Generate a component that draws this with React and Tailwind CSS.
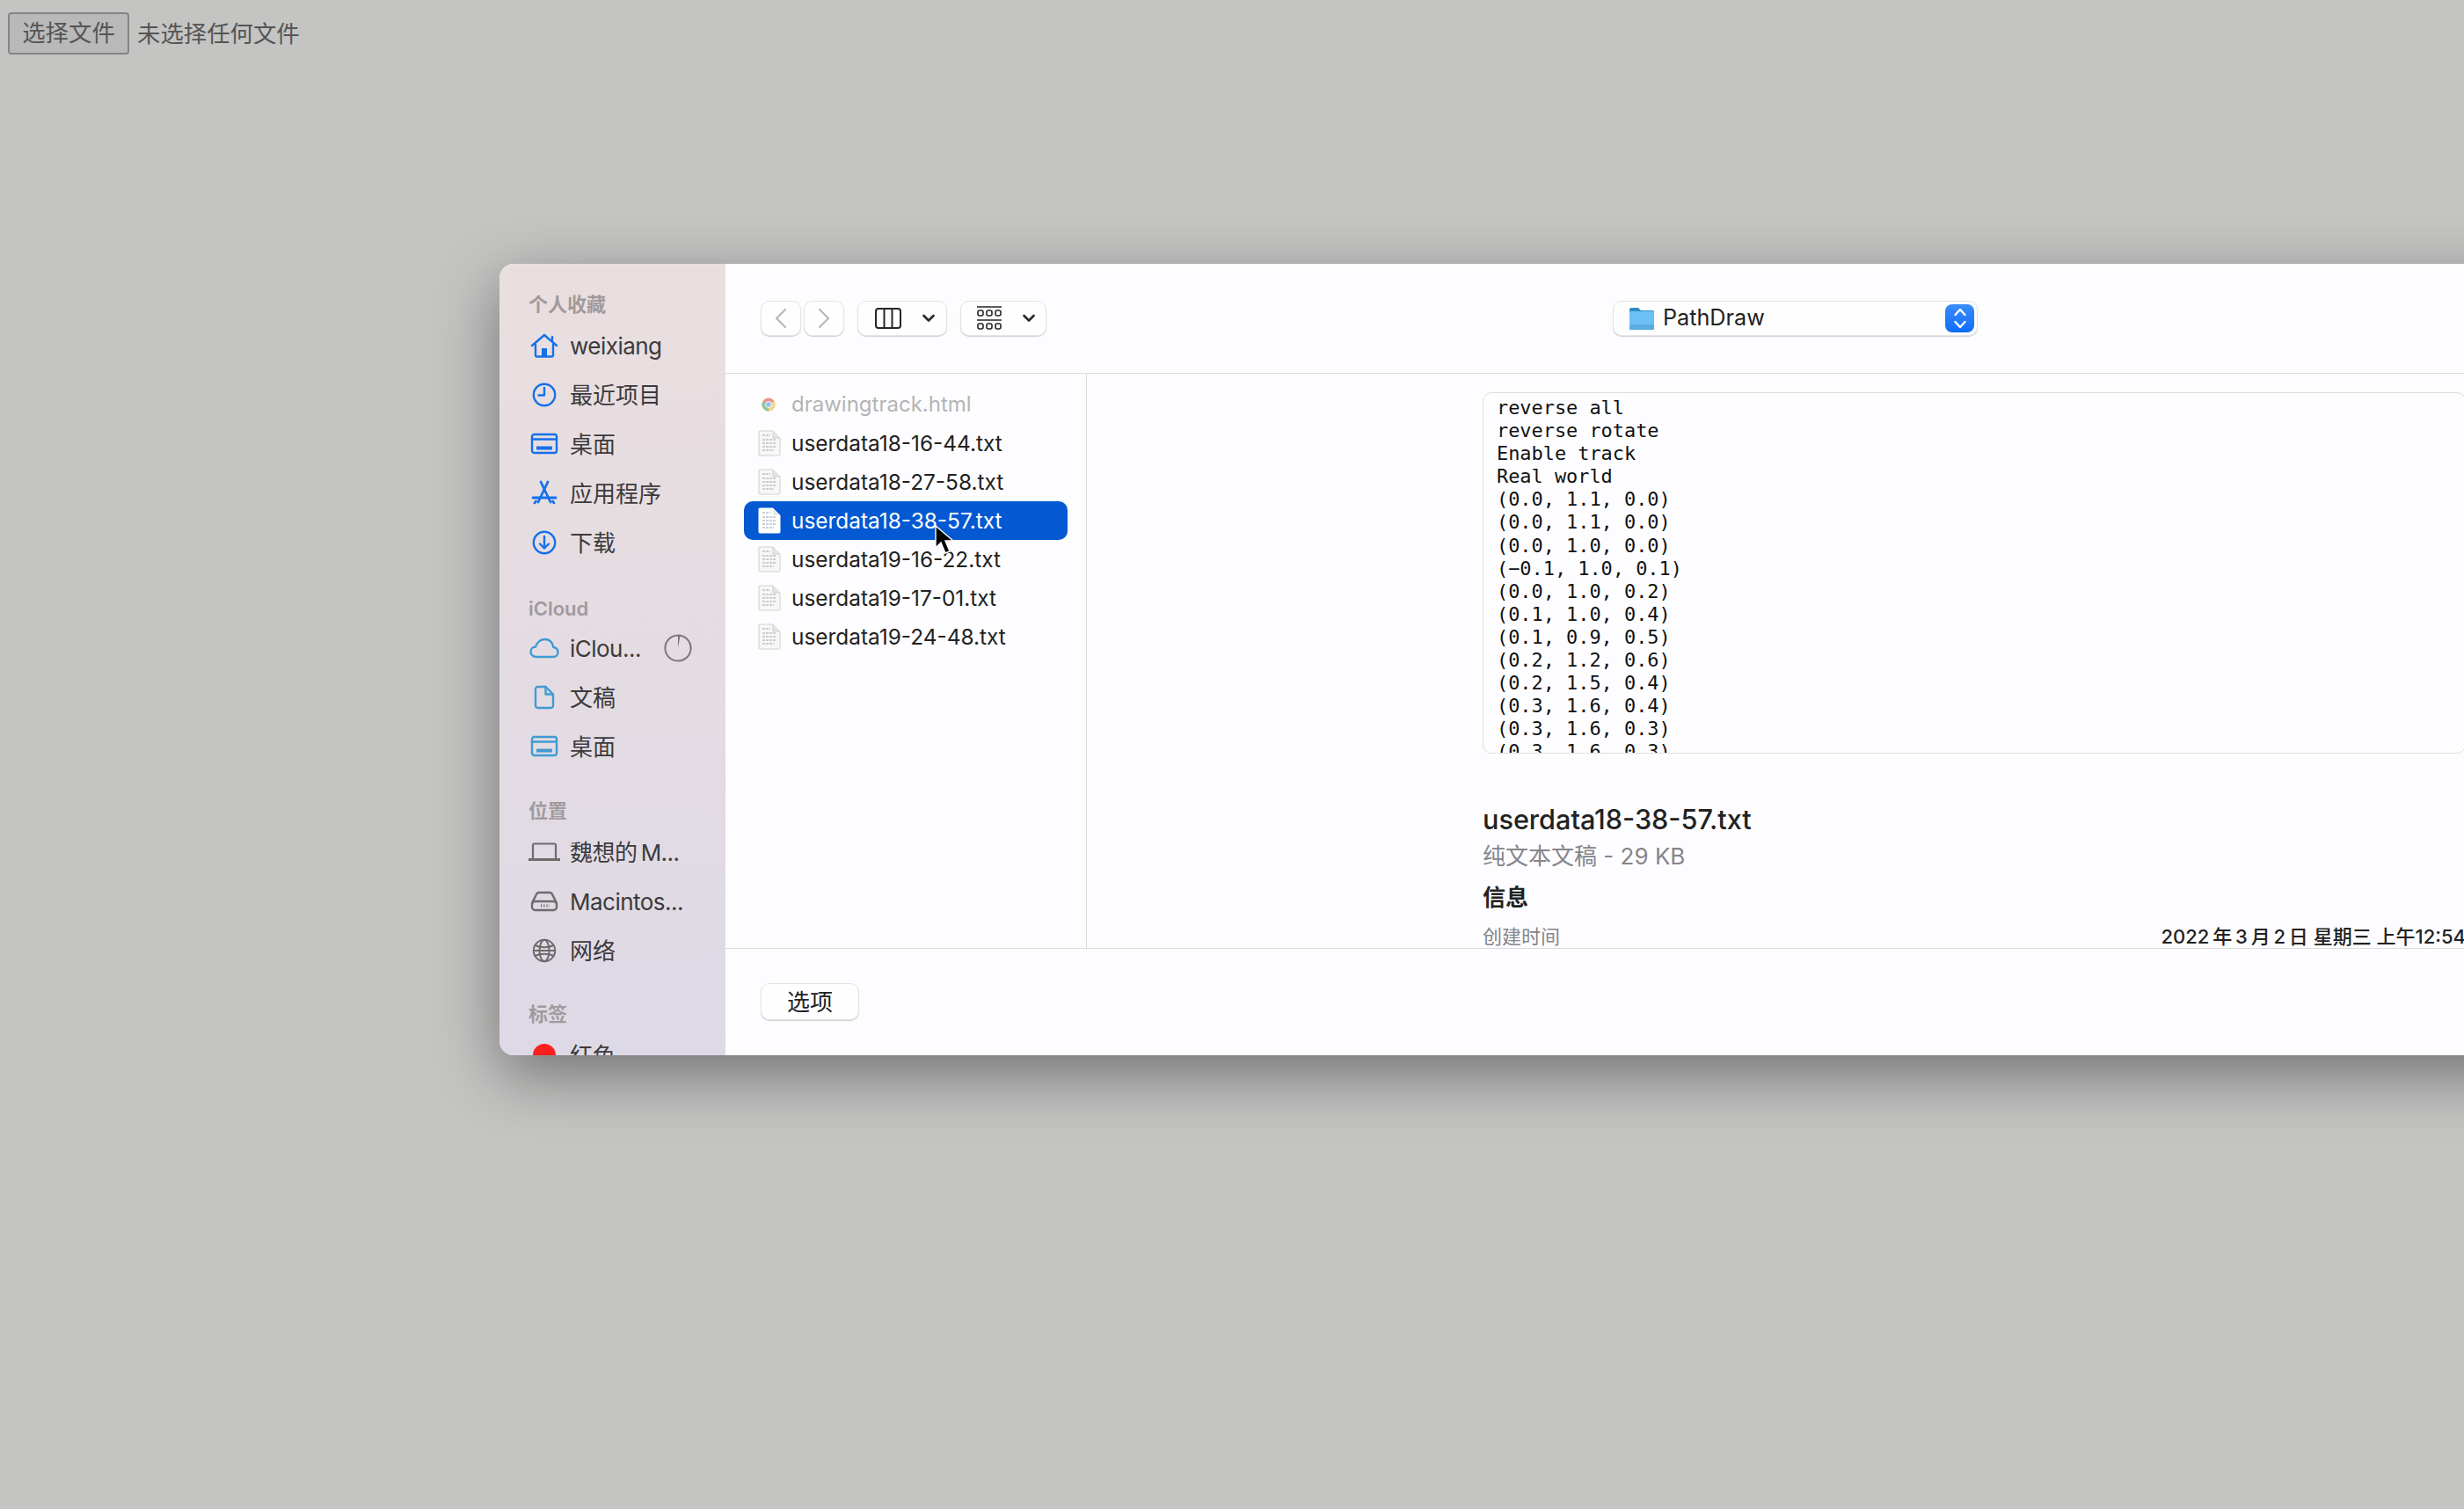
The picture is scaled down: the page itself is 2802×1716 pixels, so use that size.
const sans = "font-['Inter','Noto_Sans_CJK_SC',sans-serif]";

const Stroke = ({ size = 32, h, color, sw = 2.4, children }) => (
    <svg width={size} height={h || size} viewBox={`0 0 ${size} ${h || size}`} fill="none" stroke={color} strokeWidth={sw} strokeLinecap="round" strokeLinejoin="round">
        {children}
    </svg>
);

const BLUE = "#1570ea";
const ICLOUD = "#3f9bd4";
const GREY = "#6f6a6c";

const HomeIcon = () => (
    <Stroke size={32} h={28} color={BLUE}>
        <path d="M2 14 L16 2 L30 14" />
        <path d="M25 4 V8" />
        <path d="M6 13 V25 a1.5 1.5 0 0 0 1.5 1.5 H24.5 a1.5 1.5 0 0 0 1.5 -1.5 V13" />
        <rect x="13" y="17" width="6" height="9.5" fill={BLUE} stroke="none" />
    </Stroke>
);

const ClockIcon = () => (
    <Stroke color={BLUE}>
        <circle cx="16" cy="16" r="12.2" />
        <path d="M16 8 V16.5 H9.5" />
    </Stroke>
);

const DesktopIcon = ({ color = BLUE }) => (
    <Stroke size={32} h={26} color={color}>
        <rect x="2" y="2" width="28" height="21" rx="2.5" />
        <path d="M2 7.5 H30" />
        <rect x="7" y="15.5" width="18" height="4" fill={color} stroke="none" />
    </Stroke>
);

const AppsIcon = () => (
    <Stroke color={BLUE} sw={2.8}>
        <path d="M12 3 L23 26" />
        <path d="M20 3 L9 26" />
        <path d="M3 21 H29" />
        <path d="M5 27 L6.5 25" />
        <path d="M27 27 L25.5 25" />
    </Stroke>
);

const DownloadIcon = () => (
    <Stroke color={BLUE}>
        <circle cx="16" cy="16" r="12.2" />
        <path d="M16 9 V22" />
        <path d="M11 17.5 L16 22.5 L21 17.5" />
    </Stroke>
);

const CloudIcon = () => (
    <Stroke size={34} h={24} color={ICLOUD}>
        <path d="M8 22 C3.5 22 1.5 19 1.5 16.2 C1.5 13 4 10.6 7 10.6 C8.2 6.8 11.8 2 17.8 2 C23.5 2 27 6.5 27.2 11 C30.5 11.6 32.5 14 32.5 16.8 C32.5 19.8 30 22 27 22 Z" />
    </Stroke>
);

const DocIcon = () => (
    <Stroke size={24} h={28} color={ICLOUD}>
        <path d="M4.5 2 H13.5 L22 10.5 V23.5 a2.5 2.5 0 0 1 -2.5 2.5 H4.5 a2.5 2.5 0 0 1 -2.5 -2.5 V4.5 a2.5 2.5 0 0 1 2.5 -2.5 Z" />
        <path d="M13.5 2 V10.5 H22" />
    </Stroke>
);

const LaptopIcon = () => (
    <svg width="36" height="22" viewBox="0 0 36 22" fill="none" stroke={GREY} strokeWidth="2.2">
        <path d="M5 18 V3 a1.5 1.5 0 0 1 1.5 -1.5 H29.5 a1.5 1.5 0 0 1 1.5 1.5 V18" />
        <path d="M0 19.5 H36" strokeWidth="3" />
    </svg>
);

const DriveIcon = () => (
    <Stroke size={32} h={24} color={GREY}>
        <path d="M2 14 L7 4 a3 3 0 0 1 2.6 -2 H22.4 a3 3 0 0 1 2.6 2 L30 14" />
        <rect x="2" y="12" width="28" height="10" rx="3.5" />
        <path d="M12 17 H22" strokeDasharray="1.2 2" strokeLinecap="butt" strokeWidth="3" />
    </Stroke>
);

const GlobeIcon = () => (
    <Stroke color={GREY} sw={2}>
        <circle cx="16" cy="16" r="12.2" />
        <ellipse cx="16" cy="16" rx="5.5" ry="12.2" />
        <path d="M5.5 10 C11 13 21 13 26.5 10" />
        <path d="M5.5 22 C11 19 21 19 26.5 22" />
        <path d="M4 16 H28" />
    </Stroke>
);

const PieIcon = () => (
    <svg width="32" height="32" viewBox="0 0 32 32" fill="none">
        <circle cx="16" cy="16" r="14.6" stroke="#7b7779" strokeWidth="2" />
        <path d="M16 16 V1.5 A14.5 14.5 0 0 1 18.5 1.7 Z" fill="#7b7779" />
    </svg>
);

const FileIcon = ({ active }) => {
    const sheet = active ? "#ffffff" : "#f7f7f7";
    const ink = active ? "#b9c0cc" : "#c0c0c0";
    return (
        <svg width="26" height="30" viewBox="0 0 26 30">
            <path d="M2 1 H17 L25 9 V28 a1 1 0 0 1 -1 1 H2 a1 1 0 0 1 -1 -1 V2 a1 1 0 0 1 1 -1 Z" fill={sheet} stroke={active ? "#ffffff" : "#d2d2d2"} />
            <path d="M17 1 V9 H25" fill={active ? "#dfe6f2" : "#e6e6e6"} stroke={active ? "#ffffff" : "#cfcfcf"} />
            <g stroke={ink} strokeWidth="1.6" strokeDasharray="3 1">
                <path d="M5 6 H14" />
                <path d="M5 11 H21" />
                <path d="M5 15 H21" />
                <path d="M5 19 H21" />
                <path d="M5 23 H18" />
            </g>
        </svg>
    );
};

const ChromeIcon = () => (
    <svg width="16" height="16" viewBox="0 0 16 16" className="opacity-70">
        <circle cx="8" cy="8" r="7.5" fill="#e8695b" />
        <path d="M8 8 L1.5 4.2 A7.5 7.5 0 0 0 8 15.5 Z" fill="#63b26f" />
        <path d="M8 8 L8 15.5 A7.5 7.5 0 0 0 14.5 4.2 Z" fill="#efc85c" />
        <circle cx="8" cy="8" r="3.4" fill="#6ea1e6" stroke="#fff" strokeWidth="1" />
    </svg>
);

const FolderIcon = () => (
    <svg width="30" height="28" viewBox="0 0 30 28">
        <path d="M1 4 a2 2 0 0 1 2 -2 H11 L14 5 H27 a2 2 0 0 1 2 2 V10 H1 Z" fill="#2d8dc4" />
        <rect x="1" y="6" width="28" height="21" rx="2" fill="#6cc0f5" />
        <rect x="1" y="21" width="28" height="6" rx="1.5" fill="#59abe0" />
    </svg>
);

const groups = [
    {
        title: "个人收藏",
        cls: "mt-0",
        rowsCls: "mt-[4px]",
        rows: [
            { icon: <HomeIcon />, label: "weixiang", latin: true },
            { icon: <ClockIcon />, label: "最近项目" },
            { icon: <DesktopIcon />, label: "桌面" },
            { icon: <AppsIcon />, label: "应用程序" },
            { icon: <DownloadIcon />, label: "下载" },
        ],
    },
    {
        title: "iCloud",
        cls: "mt-[32px]",
        rowsCls: "mt-[2px]",
        rows: [
            { icon: <CloudIcon />, label: "iClou...", extra: <PieIcon />, latin: true },
            { icon: <DocIcon />, label: "文稿" },
            { icon: <DesktopIcon color={ICLOUD} />, label: "桌面" },
        ],
    },
    {
        title: "位置",
        cls: "mt-[30px]",
        rowsCls: "mt-[4px]",
        rows: [
            { icon: <LaptopIcon />, label: "魏想的\u2009M...", latin: true },
            { icon: <DriveIcon />, label: "Macintos...", latin: true },
            { icon: <GlobeIcon />, label: "网络" },
        ],
    },
    {
        title: "标签",
        cls: "mt-[29px]",
        rowsCls: "mt-[4px]",
        rows: [{ icon: <span className="block w-[26px] h-[26px] rounded-full bg-[#fb1f1f]" />, label: "红色" }],
    },
];

const files = [
    { name: "drawingtrack.html", dim: true },
    { name: "userdata18-16-44.txt" },
    { name: "userdata18-27-58.txt" },
    { name: "userdata18-38-57.txt", active: true },
    { name: "userdata19-16-22.txt" },
    { name: "userdata19-17-01.txt" },
    { name: "userdata19-24-48.txt" },
];

const preview = `reverse all
reverse rotate
Enable track
Real world
(0.0, 1.1, 0.0)
(0.0, 1.1, 0.0)
(0.0, 1.0, 0.0)
(−0.1, 1.0, 0.1)
(0.0, 1.0, 0.2)
(0.1, 1.0, 0.4)
(0.1, 0.9, 0.5)
(0.2, 1.2, 0.6)
(0.2, 1.5, 0.4)
(0.3, 1.6, 0.4)
(0.3, 1.6, 0.3)
(0.3, 1.6, 0.3)`;

const btn = "h-[40px] rounded-[10px] border border-[#e4e4e6] shadow-[0_1px_1px_rgba(0,0,0,0.18)] bg-[#fefeff] flex items-center";

const Chevron = () => (
    <svg width="14" height="10" viewBox="0 0 14 10" fill="none" stroke="#2a2a2a" strokeWidth="2.6" strokeLinecap="round" strokeLinejoin="round">
        <path d="M1.5 2 L7 7.5 L12.5 2" />
    </svg>
);

const Toolbar = () => (
    <div className="h-[125px] shrink-0 border-b border-[#dcdcdc] flex items-center relative pl-[40px]">
        <div className={`${btn} w-[46px] justify-center`}>
            <svg width="14" height="24" viewBox="0 0 14 24" fill="none" stroke="#b8b8b8" strokeWidth="2.2" strokeLinecap="round" strokeLinejoin="round"><path d="M12 2 L2 12 L12 22" /></svg>
        </div>
        <div className={`${btn} w-[46px] justify-center ml-[3px]`}>
            <svg width="14" height="24" viewBox="0 0 14 24" fill="none" stroke="#b8b8b8" strokeWidth="2.2" strokeLinecap="round" strokeLinejoin="round"><path d="M2 2 L12 12 L2 22" /></svg>
        </div>
        <div className={`${btn} w-[102px] ml-[15px] pl-[19px] gap-[24px]`}>
            <svg width="30" height="24" viewBox="0 0 30 24" fill="none" stroke="#262626" strokeWidth="2">
                <rect x="1" y="1" width="28" height="22" rx="3" />
                <path d="M10.5 1 V23 M19.5 1 V23" />
            </svg>
            <Chevron />
        </div>
        <div className={`${btn} w-[98px] ml-[15px] pl-[18px] gap-[24px]`}>
            <svg width="28" height="28" viewBox="0 0 28 28" fill="none" stroke="#262626" strokeWidth="1.6">
                <path d="M0 1 H28 M0 16 H28" />
                <rect x="1" y="5" width="6" height="6" rx="2" />
                <rect x="11" y="5" width="6" height="6" rx="2" />
                <rect x="21" y="5" width="6" height="6" rx="2" />
                <rect x="1" y="20" width="6" height="6" rx="2" />
                <rect x="11" y="20" width="6" height="6" rx="2" />
                <rect x="21" y="20" width="6" height="6" rx="2" />
            </svg>
            <Chevron />
        </div>
        <div className={`${btn} w-[415px] ml-[644px] pl-[17px] pr-[3px] gap-[9px]`}>
            <FolderIcon />
            <span className="flex-1 text-[25.2px] text-[#222]">PathDraw</span>
            <span className="w-[33px] h-[32px] rounded-[8px] bg-gradient-to-b from-[#3a8cf8] to-[#0a6cfb] flex items-center justify-center">
                <svg width="16" height="26" viewBox="0 0 16 26" fill="none" stroke="#fff" strokeWidth="2.4" strokeLinecap="round" strokeLinejoin="round">
                    <path d="M2.5 9 L8 3 L13.5 9" />
                    <path d="M2.5 17 L8 23 L13.5 17" />
                </svg>
            </span>
        </div>
    </div>
);

const Sidebar = () => (
    <aside className="w-[257px] shrink-0 h-full overflow-hidden pt-[31px] pl-[33px] bg-gradient-to-b from-[#eadfdf] to-[#ded9e6]">
        {groups.map((g) => (
            <div key={g.title} className={g.cls}>
                <div className="h-[30px] flex items-center text-[22px] font-semibold text-[#a09a9c]">{g.title}</div>
                <div className={g.rowsCls}>
                    {g.rows.map((r) => (
                        <div key={r.label} className="h-[56px] flex items-center text-[26px] text-[#3c3a3c]">
                            <span className="w-[36px] flex justify-center shrink-0">{r.icon}</span>
                            <span className={`ml-[11px] whitespace-nowrap ${r.latin ? "tracking-[-0.02em]" : ""}`}>{r.label}</span>
                            {r.extra && <span className="ml-[26px]">{r.extra}</span>}
                        </div>
                    ))}
                </div>
            </div>
        ))}
    </aside>
);

const FileList = () => (
    <div className="w-[411px] shrink-0 h-full border-r border-[#dcdcdc] pt-[13px] px-[21px] relative">
        {files.map((f) => (
            <div
                key={f.name}
                className={`h-[44px] flex items-center rounded-[10px] ${
                    f.active ? "bg-[#0459d2] text-white text-[24.4px]" : f.dim ? "text-[#b4b4b4] text-[24px]" : "text-[#222] text-[24.4px]"
                }`}
            >
                <span className="w-[34px] ml-[11px] flex shrink-0 pl-[5px] items-center">
                    {f.dim ? <span className="ml-[4px] flex"><ChromeIcon /></span> : <FileIcon active={f.active} />}
                </span>
                <span className="ml-[9px]">{f.name}</span>
            </div>
        ))}
        {/* mouse pointer */}
        <svg className="absolute left-[237px] top-[172px]" width="26" height="36" viewBox="0 0 26 36">
            <path d="M2 1 L2 26 L8 20 L13 32 L18 30 L13 18 L22 18 Z" fill="#000" stroke="#fff" strokeWidth="1.4" />
        </svg>
    </div>
);

const Preview = () => (
    <div className="flex-1 h-full overflow-hidden pl-[450px] pt-[21px]">
        <div className="w-[1118px]">
            <pre className="h-[411px] overflow-hidden rounded-[10px] border border-[#dedede] pl-[15px] pt-[4px] font-['DejaVu_Sans_Mono',monospace] text-[21.9px] leading-[26.1px] text-[#111]">
                {preview}
            </pre>
            <div className="mt-[57px] text-[30.6px] leading-[36px] font-medium text-[#222]">userdata18-38-57.txt</div>
            <div className="mt-[6px] text-[26px] leading-[36px] text-[#85858a]">纯文本文稿 - 29 KB</div>
            <div className="mt-[11px] text-[26px] leading-[36px] font-semibold text-[#222]">信息</div>
            <div className="mt-[11px] flex justify-between text-[22px] leading-[30px] whitespace-nowrap">
                <span className="text-[#85858a]">创建时间</span>
                <span className="font-medium text-[#222]">2022{"\u2009"}年{"\u2009"}3{"\u2009"}月{"\u2009"}2{"\u2009"}日 星期三 上午12:54</span>
            </div>
        </div>
    </div>
);

export default function App() {
    return (
        <div className={`w-[2802px] h-[1716px] overflow-hidden bg-[#c4c4c3] ${sans}`}>
            <div className="h-[76px] pt-[14px] pl-[9px] flex items-start text-[26.4px] text-[#555]">
                <button className="w-[138px] h-[48px] rounded-[4px] border-2 border-[#858585] bg-[#b9b9ba] text-center">选择文件</button>
                <span className="ml-[9px] leading-[48px]">未选择任何文件</span>
            </div>
            <div className="ml-[568px] mt-[224px] w-[2400px] h-[900px] rounded-l-[16px] overflow-hidden flex bg-[#fdfdff] shadow-[0_22px_70px_rgba(0,0,0,0.42)]">
                <Sidebar />
                <div className="flex-1 flex flex-col min-w-0">
                    <Toolbar />
                    <div className="h-[654px] shrink-0 flex border-b border-[#dcdcdc]">
                        <FileList />
                        <Preview />
                    </div>
                    <div className="flex-1 pl-[40px] pt-[39px]">
                        <div className={`${btn} w-[112px] h-[42px] justify-center text-[26px] text-[#222]`}>选项</div>
                    </div>
                </div>
            </div>
        </div>
    );
}
